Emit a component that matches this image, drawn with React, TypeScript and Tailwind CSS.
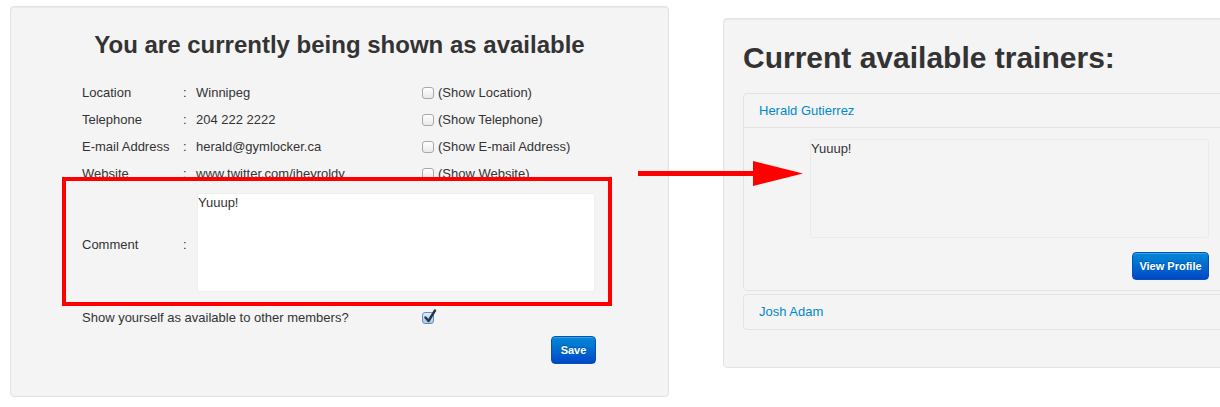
import React from 'react'

type Field = {
    label: string;
    value: string;
    toggle: string;
}

const fields: Field[] = [
    { label: 'Location', value: 'Winnipeg', toggle: '(Show Location)' },
    { label: 'Telephone', value: '204 222 2222', toggle: '(Show Telephone)' },
    { label: 'E-mail Address', value: 'herald@gymlocker.ca', toggle: '(Show E-mail Address)' },
    { label: 'Website', value: 'www.twitter.com/jheyroldy', toggle: '(Show Website)' },
];

function Checkbox({ checked = false }: { checked?: boolean }) {
    if (checked) {
        return (
            <span className="relative block w-[12px] h-[12px] shrink-0 rounded-[3px] border border-[#6b8db8] bg-linear-to-b from-[#dcebfb] to-[#a9c9ee]">
                <svg className="absolute left-[1px] top-[-4px]" width="13" height="15" viewBox="0 0 13 15">
                    <path d="M1.5 8.5 L4.5 12 L11 1.5" fill="none" stroke="#26344d" strokeWidth="2.4" strokeLinecap="round" strokeLinejoin="round" />
                </svg>
            </span>
        );
    }
    return (
        <span className="block w-[12px] h-[12px] shrink-0 rounded-[3px] border border-[#a8a8a8] bg-linear-to-b from-white to-[#e9e9e9]" />
    );
}

const blueButton =
    "bg-linear-to-b from-[#0a8ad6] to-[#0046c8] border border-[#0a4fb3] rounded-[4px] text-white font-bold text-[11px] flex items-center justify-center [text-shadow:0_-1px_0_rgba(0,0,0,0.25)] shadow-[inset_0_1px_0_rgba(255,255,255,0.2)]";

export default function App() {
    return (
        <div className="relative w-[1220px] h-[407px] overflow-hidden bg-white text-[#333] text-[13px] font-['Liberation_Sans',Arial,sans-serif]">
            <div className="flex items-start">
                {/* availability form */}
                <div className="ml-[10px] mt-[6px] w-[659px] h-[391px] shrink-0 bg-[#f4f4f4] border border-[#e3e3e3] rounded-[4px] shadow-[inset_0_1px_1px_rgba(0,0,0,0.05)] pt-[23px]">
                    <h1 className="text-center text-[24px] leading-[30px] font-bold text-[#333]">
                        You are currently being shown as available
                    </h1>
                    <div className="pl-[71px] mt-[19px]">
                        {fields.map((f) => (
                            <div key={f.label} className="flex items-center h-[27px]">
                                <span className="w-[101px]">{f.label}</span>
                                <span className="w-[13px]">:</span>
                                <span className="w-[226px]">{f.value}</span>
                                <label className="flex items-center gap-[4px]">
                                    <Checkbox />
                                    <span>{f.toggle}</span>
                                </label>
                            </div>
                        ))}
                        <div className="flex items-center mt-[6px] h-[99px]">
                            <span className="w-[101px] mt-[5px]">Comment</span>
                            <span className="w-[14px] mt-[5px]">:</span>
                            <textarea
                                readOnly
                                defaultValue="Yuuup!"
                                className="w-[398px] h-[99px] resize-none bg-white border border-[#efefef] rounded-[2px] px-0 pt-0 text-[13px] leading-[17px] text-[#333] outline-none"
                            />
                        </div>
                        <div className="flex items-center mt-[12px] h-[27px]">
                            <span className="w-[340px]">Show yourself as available to other members?</span>
                            <Checkbox checked />
                        </div>
                        <div className="flex justify-end w-[514px] mt-[5px]">
                            <button type="button" className={`${blueButton} w-[45px] h-[28px]`}>
                                Save
                            </button>
                        </div>
                    </div>
                </div>

                {/* trainers list */}
                <div className="ml-[54px] mt-[18px] w-[530px] h-[350px] shrink-0 bg-[#f4f4f4] border border-[#e3e3e3] rounded-[4px] shadow-[inset_0_1px_1px_rgba(0,0,0,0.05)] pt-[20px] pl-[19px]">
                    <h2 className="text-[30px] leading-[38px] font-bold text-[#333]">Current available trainers:</h2>
                    <div className="mt-[16px] w-[482px]">
                        <div className="border border-[#e3e3e3] rounded-[4px]">
                            <div className="h-[34px] flex items-center px-[15px] border-b border-[#e3e3e3] text-[#0088cc]">
                                Herald Gutierrez
                            </div>
                            <div className="pl-[66px] pr-[15px] pt-[11px] pb-[10px]">
                                <div className="w-[399px] h-[99px] border border-[#ebebeb] rounded-[2px] leading-[17px]">
                                    Yuuup!
                                </div>
                                <div className="flex justify-end w-[399px] mt-[14px]">
                                    <button type="button" className={`${blueButton} w-[77px] h-[28px]`}>
                                        View Profile
                                    </button>
                                </div>
                            </div>
                        </div>
                        <div className="mt-[3px] border border-[#e3e3e3] rounded-[4px]">
                            <div className="h-[34px] flex items-center px-[15px] text-[#0088cc]">Josh Adam</div>
                        </div>
                    </div>
                </div>
            </div>

            {/* annotation: highlight box */}
            <div className="absolute left-[62px] top-[177px] w-[550px] h-[129px] border-[4px] border-[#ff0000]" />

            {/* annotation: arrow */}
            <svg className="absolute left-[638px] top-[161px]" width="166" height="26" viewBox="0 0 166 26">
                <rect x="0" y="10" width="118" height="5" fill="#ff0000" />
                <polygon points="115,0 165,12.5 115,25" fill="#ff0000" />
            </svg>
        </div>
    )
}
